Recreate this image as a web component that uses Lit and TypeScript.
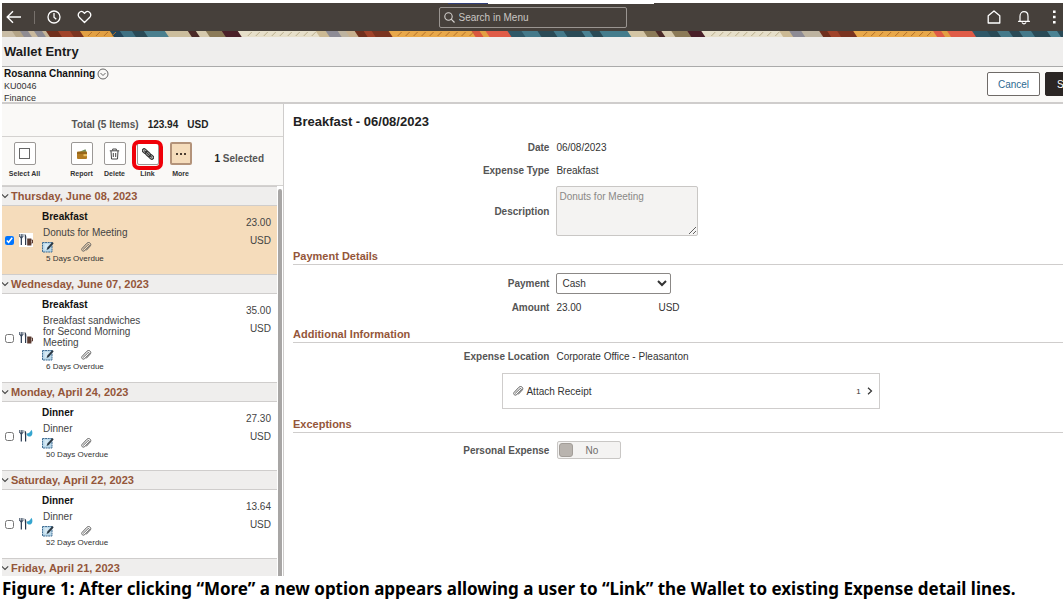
import { LitElement, html, css, svg, nothing } from "lit";
import { customElement, property, state } from "lit/decorators.js";
import { classMap } from "lit/directives/class-map.js";

interface WalletItem {
  id: string;
  date: string;
  type: string;
  note: string;
  amount: string;
  overdue: string;
}

const ITEMS: WalletItem[] = [
  { id: "i1", date: "Thursday, June 08, 2023", type: "Breakfast", note: "Donuts for Meeting", amount: "23.00", overdue: "5 Days Overdue" },
  { id: "i2", date: "Wednesday, June 07, 2023", type: "Breakfast", note: "Breakfast sandwiches for Second Morning Meeting", amount: "35.00", overdue: "6 Days Overdue" },
  { id: "i3", date: "Monday, April 24, 2023", type: "Dinner", note: "Dinner", amount: "27.30", overdue: "50 Days Overdue" },
  { id: "i4", date: "Saturday, April 22, 2023", type: "Dinner", note: "Dinner", amount: "13.64", overdue: "52 Days Overdue" },
];

/* Banner segments: start x and fill; each one is slanted. */
const BANNER: [number, string][] = [
  [0, "#c9bda6"], [14, "#b3a487"], [22, "#8f8c92"], [30, "#c9b99d"], [36, "#8b8a93"], [44, "#c4b597"],
  [48, "#6f2f1d"], [60, "#a0432a"], [72, "#7a3421"], [82, "#e2a043"], [112, "#24455a"], [122, "#3f7183"],
  [134, "#2a4a56"], [146, "#4a7f8e"], [167, "#cbbd9d"], [190, "#4b2a28"], [198, "#d5c9ad"], [208, "#8b7a58"],
  [224, "#4a2029"], [240, "#e6dfca"], [318, "#cbb994"], [328, "#8d8b95"], [340, "#bdb3a0"], [348, "#c7b08e"],
  [357, "#6f2f1d"], [366, "#a0432a"], [374, "#7a3421"], [391, "#e8a84a"], [474, "#d9583f"], [482, "#e2a043"],
  [488, "#df5b47"], [510, "#2f5868"], [524, "#44798a"], [540, "#2a4a56"], [556, "#44798a"], [566, "#2a4a56"],
  [584, "#4a8293"], [592, "#2a4a56"], [602, "#447c8c"], [630, "#d3c5a5"], [646, "#8b7a58"], [658, "#4b2a28"],
  [664, "#d5c9ad"], [674, "#8b7a58"], [690, "#4a2029"], [704, "#e6dfca"], [782, "#cbb994"], [792, "#8d8b95"],
  [804, "#bdb3a0"], [822, "#6f2f1d"], [830, "#a0432a"], [840, "#7a3421"], [856, "#e8a84a"], [936, "#df5b47"],
  [944, "#e2a043"], [950, "#df5b47"], [975, "#2f5868"], [990, "#2a4a56"], [1000, "#44798a"], [1012, "#2a4a56"],
  [1022, "#44798a"], [1034, "#2a4a56"], [1050, "#4a8293"], [1060, "#2a4a56"],
];
const HATCHES: [number, number, string][] = [
  [86, 112, "#b26f2a"], [396, 472, "#b26f2a"], [862, 934, "#b26f2a"],
  [246, 316, "#b9ad8c"], [710, 780, "#b9ad8c"],
];

const clip = html`<svg class="clip" viewBox="0 0 12 12" width="12" height="12" aria-hidden="true">
  <path d="M3.400 8.200 7.800 3.900c1-.9 2.200.3 1.300 1.200L4.700 9.600c-1.700 1.600-4-.6-2.500-2.300L7 2.200c2-1.900 5.100.7 3.200 2.900L6.400 9.200"
    fill="none" stroke="#5c5c5c" stroke-width="1" stroke-linecap="round" /></svg>`;

const note = html`<svg viewBox="0 0 12 12" width="12" height="12" aria-hidden="true">
  <rect x=".5" y="1.5" width="9.5" height="9.5" fill="#b9d8ea" stroke="#3f6c93" stroke-dasharray="2 .6" />
  <path d="M2.500 4h4M2.500 6h3M2.500 8h2" stroke="#f4fafd" stroke-width="1" />
  <path d="M4.600 9 5.400 6.600 10.400 1l1.300 1.200L6.800 8z" fill="#2b3742" /></svg>`;

const foodIcon = (type: string) => html`<svg viewBox="0 0 14 14" width="14" height="14" aria-hidden="true">
  ${type === "Breakfast"
    ? svg`<rect width="14" height="14" fill="#fff" />
      <path d="M.7 1v3M2.300 1v3M3.900 1v3" stroke="#36475e" stroke-width=".9" />
      <path d="M.4 3.600h3.900L3 5.600V12H1.700V5.600z" fill="#36475e" />
      <path d="M5.600 1c1.800.6 2 3.500 1.600 5.500V12H6V6.500z" fill="#2f3b4d" />
      <path d="M8.200 5.500h4.200v7H8.200z" fill="#5a3a30" /><path d="M12.400 7h1.100v3h-1.100" stroke="#5a3a30" fill="none" />`
    : svg`<path d="M.7 1v3M2.300 1v3M3.900 1v3" stroke="#36475e" stroke-width=".9" />
      <path d="M.4 3.600h3.900L3 5.600v7H1.700v-7z" fill="#36475e" />
      <path d="M5.600 1.500c1.800.6 2 3.500 1.600 5v6.100H6V6.500z" fill="#27374c" />
      <path d="M7.800 4.600C10 4.600 11.400 3 12.400.8 14.600 4 13 7.600 10 7.600 8.600 7.600 7.800 6.400 7.800 4.600z" fill="#35a5cf" />`}
</svg>`;

const chevron = html`<svg viewBox="0 0 8 8" width="8" height="8" aria-hidden="true">
  <path d="M.8 2.300 4 5.500 7.200 2.300" fill="none" stroke="#444" stroke-width="1.100" /></svg>`;

@customElement("wallet-row")
class WalletRow extends LitElement {
  @property({ attribute: false }) item!: WalletItem;
  @property({ type: Boolean, reflect: true }) selected = false;

  static styles = css`
    :host { display: block; }
    .row { display: flex; padding: 0 6px 0 3px; }
    .row.on { background: #f5dcbb; }
    .pick { display: flex; align-items: center; gap: 5px; flex: none; width: 37px; }
    input { width: 9px; height: 9px; margin: 0; }
    .text { width: 100px; padding: 4px 0 9px; }
    .type { font-size: 10px; line-height: 13px; font-weight: 700; color: #111; }
    .note { margin: 4px 0 1px 1px; min-height: 13px; font-size: 10px; line-height: 11px; color: #444; }
    .marks { display: flex; gap: 26px; height: 12px; }
    .due { padding-left: 4px; font-size: 8px; line-height: 12px; color: #333; white-space: nowrap; }
    .cost { margin-left: auto; padding-top: 8px; text-align: right; font-size: 10px; line-height: 18px; color: #444; }
  `;

  render() {
    const i = this.item;
    return html`<div class=${classMap({ row: true, on: this.selected })}>
      <div class="pick">
        <input type="checkbox" aria-label="Select ${i.type}" .checked=${this.selected} />
        ${foodIcon(i.type)}
      </div>
      <div class="text">
        <div class="type">${i.type}</div>
        <div class="note">${i.note}</div>
        <div class="marks">${note}${clip}</div>
        <div class="due">${i.overdue}</div>
      </div>
      <div class="cost">${i.amount}<br />USD</div>
    </div>`;
  }
}

@customElement("app-root")
class AppRoot extends LitElement {
  @state() private selected = "i1";

  static styles = css`
    :host {
      display: flex; flex-direction: column; box-sizing: border-box; height: 100vh;
      padding: 3px 1px 0 2px; overflow: hidden; background: #fff; color: #333;
      font-family: "Liberation Sans", Arial, sans-serif; font-size: 10px;
    }
    * { box-sizing: border-box; }
    h1, h2, h3, p { margin: 0; }
    button, input, select, textarea { font: inherit; }
    svg { display: block; }

    .top {
      position: relative; display: grid; grid-template-columns: 1fr 188px 1fr; align-items: center;
      height: 28px; flex: none; background: #46403b; color: #fff;
    }
    .remnant { position: absolute; left: 42%; width: 206px; height: 1px; top: 0; background: linear-gradient(90deg, #2f3d77 40px, #fff 40px); }
    .nav { display: flex; align-items: center; gap: 16px; padding-left: 4px; }
    .nav.end { justify-content: flex-end; padding: 0 2px 0 0; }
    .icon { display: block; padding: 0; border: 0; background: none; color: inherit; }
    .split { width: 1px; height: 13px; margin: 0 -4px; background: #77716c; }
    .search {
      display: flex; align-items: center; gap: 4px; height: 21px; padding: 0 4px;
      border: 1px solid #9a9591; border-radius: 2px;
    }
    .search input { flex: 1; min-width: 0; padding: 0; border: 0; outline: 0; background: none; color: #fff; }
    .search input::placeholder { color: #c9c6c3; opacity: 1; }
    .banner { flex: none; height: 6px; width: 100%; }

    .title { flex: none; height: 30px; padding-left: 2px; background: #efeeed; border-bottom: 1px solid #aaa; font-size: 13px; line-height: 29px; color: #1a1a1a; }
    .person { display: flex; flex: none; justify-content: space-between; height: 37px; padding-left: 2px; background: #faf9f7; border-bottom: 2px solid #cfcdcc; overflow: hidden; }
    .name { display: flex; align-items: center; gap: 2px; height: 13px; font-size: 10px; color: #111; }
    .who p { font-size: 9px; line-height: 12px; }
    .actions { display: flex; gap: 5px; padding-top: 5px; margin-right: -35px; }
    .btn { width: 53px; height: 24px; padding: 0; border: 1px solid #6f6b68; border-radius: 2px; background: #fff; color: #2d6a92; }
    .btn.dark { padding-left: 11px; text-align: left; background: #2b2624; border-color: #2b2624; color: #fff; }

    .body { display: flex; flex: 1; min-height: 0; }
    .side { display: flex; flex-direction: column; flex: none; width: 282px; border-right: 1px solid #cfcdcc; background: #faf9f7; }
    .total { display: flex; justify-content: center; gap: 9px; height: 33px; line-height: 41px; padding-right: 5px; border-bottom: 1px solid #d4d2d0; font-weight: 700; color: #222; }
    .total span { color: #555; }
    .tools { display: flex; height: 49px; padding: 5px 5px 0 6px; border-bottom: 1px solid #d4d2d0; }
    .tool { position: relative; display: flex; flex-direction: column; align-items: center; gap: 3px; width: 33px; padding: 0; border: 0; background: none; font-size: 7px; line-height: 11px; font-weight: 700; color: #333; white-space: nowrap; }
    .tool .box { display: grid; place-items: center; width: 22px; height: 23px; border: 1px solid #9b9896; border-radius: 2px; background: #fff; }
    .tool.first { margin-right: 24px; }
    .tool.on .box { border: 2px solid #b3937a; background: #f5dcbb; }
    .halo { position: absolute; top: -2px; left: 1px; width: 31px; height: 30px; border: 4px solid #f00009; border-radius: 7px; }
    .count { margin: 0 14px 0 auto; line-height: 34px; font-weight: 700; color: #555; }
    .count b { color: #222; }

    .list { display: flex; flex: 1; min-height: 0; background: #fff; }
    .groups { flex: 1; overflow: hidden; }
    .bar { width: 6px; flex: none; padding: 3px 1px 0 0; }
    .bar div { height: 100%; margin-left: 1px; border-radius: 2px 2px 0 0; background: #a8a6a5; }
    .day { display: flex; align-items: center; gap: 2px; height: 20px; background: #efeeed; border: solid #cfcdcc; border-width: 1px 0; font-size: 11px; color: #94563a; }
    .day svg { margin-left: -1px; }

    .detail { flex: 1; min-width: 0; padding: 10px 0 0 9px; background: #fff; }
    .detail h2 { margin-bottom: 6px; font-size: 13px; line-height: 16px; color: #222; }
    .detail h3 { margin-top: 8px; font-size: 11px; line-height: 15px; border-bottom: 1px solid #cfcdcc; color: #94563a; }
    .section { padding-top: 2px; }
    .field { display: grid; grid-template-columns: 33.3% 1fr; column-gap: 7px; align-items: center; min-height: 23px; }
    .field > :first-child { text-align: right; font-weight: 700; color: #555; }
    .field.area { padding: 4px 0 5px; }
    textarea { display: block; width: 142px; height: 50px; padding: 4px 2px; border: 1px solid #c9c7c5; border-radius: 2px; background: #f4f3f2; color: #8a8886; resize: both; }
    select { width: 115px; height: 21px; padding: 0 1px; border: 1px solid #8b8886; border-radius: 2px; background: #fff; color: #333; }
    .field.tall { padding: 6px 0 2px; }
    .amount { display: flex; }
    .amount span:first-child { width: 102px; }
    .attach { display: flex; align-items: center; gap: 2px; width: 49%; height: 36px; margin: 5px 0 0 27.2%; padding: 0 5px 0 9px; border: 1px solid #cfcdcc; background: #fff; color: #333; }
    .attach .num { margin: 0 3px 0 auto; font-size: 8px; }
    .switch { display: flex; align-items: center; width: 64px; height: 18px; margin-left: 1px; padding-left: 1px; border: 1px solid #c9c7c5; border-radius: 2px; background: #f4f3f2; color: #6f6d6b; }
    .switch input { appearance: none; width: 14px; height: 14px; margin: 0; border: 1px solid #a39e99; border-radius: 3px; background: #b9b4af; }
    .switch span { flex: 1; padding-right: 10px; text-align: center; }

    .caption { flex: none; height: 29px; font: 700 17px/26px "Noto Sans", sans-serif; color: #000; white-space: nowrap; }
  `;

  private tool(label: string, glyph: unknown, cls = "", halo = false) {
    return html`<button class="tool ${cls}"><span class="box">${glyph}</span>${label}${halo ? html`<span class="halo"></span>` : nothing}</button>`;
  }

  private day(label: string) {
    return html`<h3 class="day">${chevron}${label}</h3>`;
  }

  render() {
    return html`
      <header class="top">
        <div class="remnant"></div>
        <div class="nav">
          <button class="icon" aria-label="Back"><svg width="16" height="16" viewBox="0 0 16 16"><path d="M15 8H1.500M7 2.200 1.200 8 7 13.800" fill="none" stroke="#fff" stroke-width="1.400" /></svg></button>
          <span class="split"></span>
          <button class="icon" aria-label="Recent"><svg width="14" height="14" viewBox="0 0 14 14"><circle cx="7" cy="7" r="6" fill="none" stroke="#fff" stroke-width="1.300" /><path d="M7 3v4.200l2.300 2" fill="none" stroke="#fff" stroke-width="1.300" /></svg></button>
          <button class="icon" aria-label="Favorites"><svg width="15" height="14" viewBox="0 0 15 14"><path d="M7.500 12.500 2.200 7.200C-.4 4.200 3.300-.2 6.400 2.200L7.500 3.400 8.600 2.200c3.100-2.400 6.800 2 4.200 5z" fill="none" stroke="#fff" stroke-width="1.300" stroke-linejoin="round" /></svg></button>
        </div>
        <label class="search">
          <svg width="11" height="11" viewBox="0 0 11 11"><circle cx="4.500" cy="4.500" r="3.700" fill="none" stroke="#d5d2d0" stroke-width="1.100" /><path d="m7.200 7.200 3.300 3.300" stroke="#d5d2d0" stroke-width="1.200" /></svg>
          <input type="text" aria-label="Search in Menu" placeholder="Search in Menu" />
        </label>
        <div class="nav end">
          <button class="icon" aria-label="Home"><svg width="14" height="14" viewBox="0 0 14 14"><path d="M1.200 13V5.800L7 1l5.800 4.800V13z" fill="none" stroke="#fff" stroke-width="1.300" stroke-linejoin="round" /></svg></button>
          <button class="icon" aria-label="Notifications"><svg width="14" height="15" viewBox="0 0 14 15"><path d="M1.500 11.300h11M3 11V6.200c0-6 8-6 8 0V11M5.200 12.800c.8 1.300 2.800 1.300 3.600 0" fill="none" stroke="#fff" stroke-width="1.200" stroke-linecap="round" /></svg></button>
          <button class="icon" aria-label="Actions"><svg width="14" height="14" viewBox="0 0 14 14"><path d="M6 .5h2.600v2.600H6zM6 5.700h2.600v2.600H6zM6 10.900h2.600v2.600H6z" fill="#fff" /></svg></button>
        </div>
      </header>
      <svg class="banner" viewBox="0 0 1062 6" preserveAspectRatio="none" aria-hidden="true">
        ${BANNER.map(([x, fill], n) => {
          const end = (BANNER[n + 1]?.[0] ?? 1064) + 4;
          return svg`<path d="M${x - 4} 0H${end}V6H${x}z" fill=${fill} />`;
        })}
        ${HATCHES.map(([from, to, color]) => {
          const marks: string[] = [];
          for (let x = from; x < to; x += 8) marks.push(`M${x} 5l4-4`);
          return svg`<path d=${marks.join("")} stroke=${color} />`;
        })}
      </svg>
      <h1 class="title">Wallet Entry</h1>
      <section class="person">
        <div class="who">
          <h2 class="name">Rosanna Channing
            <button class="icon" aria-label="Related actions"><svg width="12" height="12" viewBox="0 0 12 12"><circle cx="6" cy="6" r="5" fill="none" stroke="#555" stroke-width=".9" /><path d="m3.500 5 2.500 2.500L8.500 5" fill="none" stroke="#555" stroke-width=".9" /></svg></button>
          </h2>
          <p>KU0046</p>
          <p>Finance</p>
        </div>
        <div class="actions">
          <button class="btn">Cancel</button>
          <button class="btn dark">Save</button>
        </div>
      </section>

      <main class="body">
        <aside class="side">
          <div class="total"><span>Total (5 Items)</span>123.94<b>USD</b></div>
          <div class="tools">
            ${this.tool("Select All", html`<svg width="11" height="11" viewBox="0 0 11 11"><rect x=".5" y=".5" width="10" height="10" fill="#fff" stroke="#666" /></svg>`, "first")}
            ${this.tool("Report", html`<svg width="12" height="12" viewBox="0 0 12 12"><path d="M3 4 9.500 1.200 10.500 4z" fill="#6b8a55" /><rect x="1" y="3.500" width="10" height="7.500" rx="1" fill="#b27b22" /><path d="M1 5h10" stroke="#7a5213" /><rect x="7.500" y="6.200" width="3.500" height="2" fill="#e9c46a" /></svg>`)}
            ${this.tool("Delete", html`<svg width="11" height="12" viewBox="0 0 11 12"><path d="M.8 2.800h9.400M3.700 2.500V1h3.600v1.500M2 3l.5 8h6L9 3M4.300 5v4M6.700 5v4" fill="none" stroke="#444" /></svg>`)}
            ${this.tool("Link", html`<svg width="12" height="12" viewBox="0 0 12 12"><g fill="#b9b9b9" stroke="#333" stroke-width="1.100" transform="rotate(42 6 6)"><rect x="-1" y="4.200" width="5.500" height="3.600" rx="1.800" /><rect x="7.500" y="4.200" width="5.500" height="3.600" rx="1.800" /><rect x="3.200" y="4.200" width="5.600" height="3.600" rx="1.800" /><path d="M1 6h10" /></g></svg>`, "", true)}
            ${this.tool("More", html`<svg width="12" height="4" viewBox="0 0 12 4"><path d="M1 1h2v2H1zM5 1h2v2H5zM9 1h2v2H9z" fill="#4a3c30" /></svg>`, "on")}
            <div class="count"><b>1</b> Selected</div>
          </div>
          <div class="list">
            <div class="groups">
              ${ITEMS.map((i) => html`${this.day(i.date)}<wallet-row .item=${i} ?selected=${i.id === this.selected}></wallet-row>`)}
              ${this.day("Friday, April 21, 2023")}
            </div>
            <div class="bar"><div></div></div>
          </div>
        </aside>

        <section class="detail">
          <h2>Breakfast - 06/08/2023</h2>
          <div class="field"><span>Date</span><span>06/08/2023</span></div>
          <div class="field"><span>Expense Type</span><span>Breakfast</span></div>
          <div class="field area"><label for="desc">Description</label><textarea id="desc" disabled .value=${"Donuts for Meeting"}></textarea></div>
          <h3>Payment Details</h3>
          <div class="section">
            <div class="field tall"><label for="pay">Payment</label><select id="pay"><option>Cash</option></select></div>
            <div class="field"><span>Amount</span><span class="amount"><span>23.00</span><span>USD</span></span></div>
          </div>
          <h3>Additional Information</h3>
          <div class="section">
            <div class="field"><span>Expense Location</span><span>Corporate Office - Pleasanton</span></div>
            <button class="attach">${clip}Attach Receipt<span class="num">1</span>
              <svg width="8" height="8" viewBox="0 0 8 8"><path d="M2 .8 5.500 4 2 7.200" fill="none" stroke="#333" stroke-width="1.200" /></svg></button>
          </div>
          <h3>Exceptions</h3>
          <div class="section">
            <div class="field tall"><label for="personal">Personal Expense</label><div class="switch"><input id="personal" type="checkbox" role="switch" disabled /><span>No</span></div></div>
          </div>
        </section>
      </main>
      <p class="caption">Figure 1: After clicking “More” a new option appears allowing a user to “Link” the Wallet to existing Expense detail lines.</p>
    `;
  }
}
